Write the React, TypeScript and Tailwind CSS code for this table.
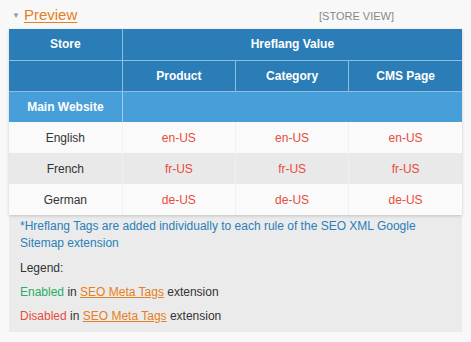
import React from "react";

const rows = [
  { name: "English", code: "en-US", bg: "bg-[#fafafa]" },
  { name: "French", code: "fr-US", bg: "bg-[#e9e9e9]" },
  { name: "German", code: "de-US", bg: "bg-[#fafafa]" },
];

export default function App() {
  return (
    <div
      className="w-[471px] h-[342px] bg-[#f8f8f8] px-[9px] text-[12px] text-[#333]"
      style={{ fontFamily: '"Liberation Sans", Arial, sans-serif' }}
    >
      <div className="h-[29px] flex items-center relative">
        <span className="text-[#999] text-[8px] ml-[3px] mr-[4px] mt-[3px] leading-none">▼</span>
        <a className="text-[15px] text-[#e67e22] underline underline-offset-2 leading-none">Preview</a>
        <span className="absolute left-[310px] top-[8px] text-[11px] text-[#888]">[STORE VIEW]</span>
      </div>
      <div className="bg-[#ebebeb] pb-[7px]">
        <table className="w-full table-fixed border-collapse shadow-[0_1px_3px_rgba(0,0,0,0.18)]">
          <thead>
            <tr className="bg-[#2a7db7] text-white font-bold h-[31px]">
              <th className="border-r border-[#8fbde0] font-bold">Store</th>
              <th colSpan={3} className="font-bold">Hreflang Value</th>
            </tr>
            <tr className="bg-[#2a7db7] text-white h-[31px] border-t border-[#8fbde0]">
              <th className="border-r border-[#8fbde0]"></th>
              <th className="border-r border-[#8fbde0] font-bold">Product</th>
              <th className="border-r border-[#8fbde0] font-bold">Category</th>
              <th className="font-bold">CMS Page</th>
            </tr>
            <tr className="bg-[#489ed8] text-white h-[31px] border-t border-[#8fbde0]">
              <th className="border-r border-[#9ccbef] font-bold">Main Website</th>
              <th colSpan={3}></th>
            </tr>
          </thead>
          <tbody>
            {rows.map((r) => (
              <tr key={r.name} className={`${r.bg} h-[31px] text-center`}>
                <td className="border-r border-[#f0f0f0]">{r.name}</td>
                <td className="border-r border-[#f0f0f0] text-[#e74c3c]">{r.code}</td>
                <td className="border-r border-[#f0f0f0] text-[#e74c3c]">{r.code}</td>
                <td className="text-[#e74c3c]">{r.code}</td>
              </tr>
            ))}
          </tbody>
        </table>
        <div className="px-[11px] pt-[3px] leading-[17px]">
          <p className="text-[#2980b9]">
            *Hreflang Tags are added individually to each rule of the SEO XML Google Sitemap extension
          </p>
          <p className="mt-[8px]">Legend:</p>
          <p className="mt-[7px]">
            <span className="text-[#27ae60]">Enabled</span> in{" "}
            <a className="text-[#e67e22] underline">SEO Meta Tags</a> extension
          </p>
          <p className="mt-[7px]">
            <span className="text-[#e74c3c]">Disabled</span> in{" "}
            <a className="text-[#e67e22] underline">SEO Meta Tags</a> extension
          </p>
        </div>
      </div>
    </div>
  );
}
